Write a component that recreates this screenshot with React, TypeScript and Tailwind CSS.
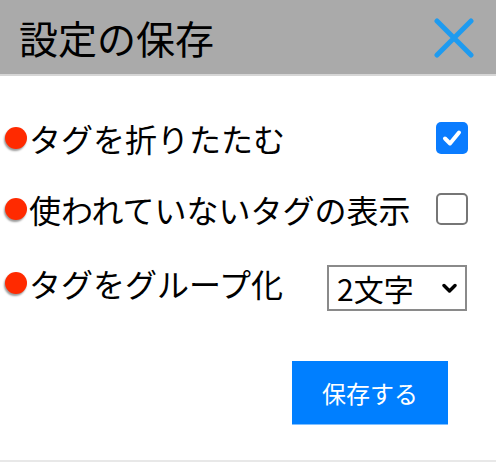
import React from "react";

const font = { fontFamily: '"Noto Sans CJK JP", "Noto Sans", sans-serif' };

function Dot() {
  return (
    <span className="block w-[22px] h-[22px] shrink-0 rounded-full bg-[#ff2a00] shadow-[-1px_2px_2px_rgba(0,0,0,0.4)]" />
  );
}

export default function App() {
  return (
    <div className="w-[496px] h-[462px] bg-white border-b-2 border-[#e8e8e8] flex flex-col" style={font}>
      <div className="h-[76px] shrink-0 bg-[#aaaaaa] border-b-2 border-[#d6d6d6] flex items-center justify-between pl-[19px] pr-[22px]">
        <span className="text-[39px] leading-none text-black">設定の保存</span>
        <svg width="40" height="40" viewBox="0 0 40 40" className="mt-[1px]">
          <path d="M3 3 L37 37 M37 3 L3 37" stroke="#1e9bf0" strokeWidth="5" strokeLinecap="round" />
        </svg>
      </div>
      <div className="flex flex-col pl-[5px] pr-[28px] pt-[46px]">
        <div className="h-[32px] flex items-center justify-between">
          <div className="flex items-center">
            <Dot />
            <span className="text-[32px] leading-none text-black ml-[2px]">タグを折りたたむ</span>
          </div>
          <div className="w-[32px] h-[32px] rounded-[5px] bg-[#0a7cff] flex items-center justify-center">
            <svg width="22" height="22" viewBox="0 0 22 22">
              <path d="M4 11.5 L9 16.5 L18 5.5" stroke="white" strokeWidth="4" fill="none" strokeLinecap="round" strokeLinejoin="round" />
            </svg>
          </div>
        </div>
        <div className="h-[32px] mt-[39px] flex items-center justify-between">
          <div className="flex items-center">
            <Dot />
            <span className="text-[32px] leading-none text-black ml-[2px]">使われていないタグの表示</span>
          </div>
          <div className="w-[32px] h-[32px] rounded-[5px] border-2 border-[#767676] bg-white" />
        </div>
        <div className="mt-[38px] flex items-start justify-between">
          <div className="flex items-center h-[40px]">
            <Dot />
            <span className="text-[32px] leading-none text-black ml-[2px]">タグをグループ化</span>
          </div>
          <div className="w-[140px] h-[46px] mt-[2px] mr-[1px] border-2 border-[#8a8a8a] bg-white flex items-center justify-between pl-[8px] pr-[8px]">
            <span className="text-[30px] leading-none text-black">2文字</span>
            <svg width="15" height="11" viewBox="0 0 15 11">
              <path d="M2 2.5 L7.5 8 L13 2.5" stroke="black" strokeWidth="3.4" fill="none" strokeLinecap="round" strokeLinejoin="round" />
            </svg>
          </div>
        </div>
        <div className="flex justify-end mt-[50px] pr-[20px]">
          <div className="w-[156px] h-[64px] bg-[#007fff] border-b border-[#7fbfff] flex items-center justify-center">
            <span className="text-[24px] leading-none text-white">保存する</span>
          </div>
        </div>
      </div>
    </div>
  );
}
